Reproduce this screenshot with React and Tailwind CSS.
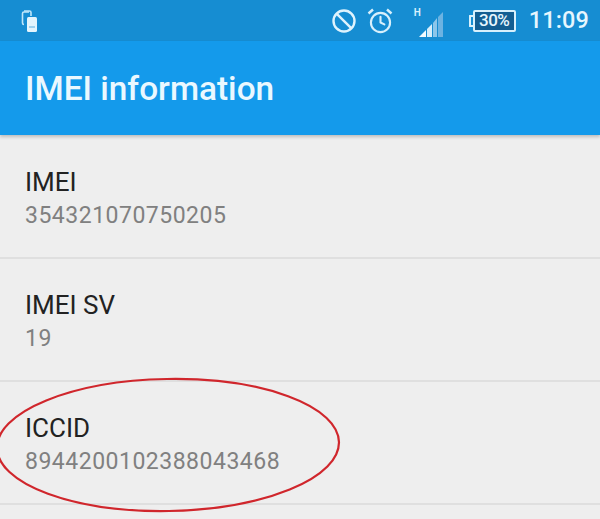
import { Clock } from "lucide-react";

const rows = [
  { label: "IMEI", value: "354321070750205" },
  { label: "IMEI SV", value: "19" },
  { label: "ICCID", value: "8944200102388043468" },
];

function Signal() {
  return (
    <div className="relative w-[32px] h-[34px]">
      <span className="absolute left-[-4px] top-[4px] text-[10px] leading-[10px] font-bold text-[#d5eefc]">H</span>
      <svg className="absolute left-0 top-0" width="32" height="34" viewBox="0 0 32 34">
        <polygon points="1,33 8,26 8,33" fill="#f2fbff" />
        <polygon points="9,33 9,25 14,20 14,33" fill="#d6eefb" />
        <polygon points="15,33 15,19 19,14 19,33" fill="#8cc6ea" />
        <polygon points="20,33 20,13 25,8 25,33" fill="#6cb3e2" />
      </svg>
    </div>
  );
}

function Battery() {
  return (
    <div className="flex items-center">
      <div className="w-[4px] h-[12px] border-2 border-r-0 border-[#d8f0fc] rounded-l-[1px]" />
      <div className="w-[43px] h-[22px] border-2 border-[#d8f0fc] rounded-[2px] flex">
        <div className="flex-1 bg-[#135e92] flex items-center justify-center text-[17px] font-medium text-[#e6f6fe] tracking-[-0.5px]">30%</div>
      </div>
    </div>
  );
}

export default function App() {
  return (
    <div className="w-[600px] h-[519px] overflow-hidden bg-[#eeeeee] font-['Roboto',sans-serif]">
      <div className="h-[41px] bg-[#168dd2] flex items-center pl-[21px] pr-[11px]">
        <svg width="16" height="22" viewBox="0 0 16 22" fill="none">
          <path d="M8 2H3a1.5 1.5 0 0 0-1.5 1.5V13a1.5 1.5 0 0 0 1.5 1.5" stroke="#bfe6fa" strokeWidth="1.6" />
          <path d="M3 1h5.5A1.5 1.5 0 0 1 10 2.5V6" stroke="#bfe6fa" strokeWidth="1.6" />
          <rect x="6" y="7" width="10" height="15" rx="1.5" fill="#e4f5fd" />
          <rect x="8" y="16" width="6" height="2" fill="#9fd2ef" />
        </svg>
        <div className="ml-auto flex items-center">
          <svg width="26" height="26" viewBox="0 0 26 26" fill="none" stroke="#dff3fd" strokeWidth="2.4">
            <circle cx="13" cy="13" r="10.5" />
            <path d="M5.8 5.8 20.2 20.2" />
          </svg>
          <div className="relative w-[26px] h-[26px] ml-[10px] text-[#d8f0fc]">
            <Clock className="absolute left-[2px] top-[3px]" size={23} strokeWidth={2.2} />
            <svg className="absolute left-0 top-0" width="26" height="26" viewBox="0 0 26 26" fill="none" stroke="currentColor" strokeWidth="2.4">
              <path d="M1.5 5.5 6 1.5" />
              <path d="M24.5 5.5 20 1.5" />
            </svg>
          </div>
          <div className="ml-[25px]"><Signal /></div>
          <div className="ml-[19px]"><Battery /></div>
          <span className="ml-[13px] text-[23.4px] font-medium leading-none text-[#e6f6fe] tracking-[0.2px]">11:09</span>
        </div>
      </div>
      <div className="h-[94px] bg-[#149aeb] flex items-center pl-[25px] pt-[3px] shadow-[0_2px_3px_rgba(0,0,0,0.2)] relative">
        <h1 className="text-[33.4px] font-medium text-[#eaf8ff]">IMEI information</h1>
      </div>
      <div className="pt-px">
        {rows.map((r) => (
          <div key={r.label} className="h-[123px] pl-[25px] pt-[30px] border-b-2 border-[#dfdfdf]">
            <div className="text-[26px] leading-[32px] text-[#222222]">{r.label}</div>
            <div className="text-[23px] leading-[36px] text-[#808080] tracking-[0.5px]">{r.value}</div>
          </div>
        ))}
      </div>
      <svg className="absolute left-0 top-[370px]" width="350" height="149" viewBox="0 0 350 149" fill="none">
        <ellipse cx="168" cy="75" rx="171" ry="66" stroke="#d0262c" strokeWidth="2.2" transform="rotate(-1 168 75)" />
      </svg>
    </div>
  );
}
